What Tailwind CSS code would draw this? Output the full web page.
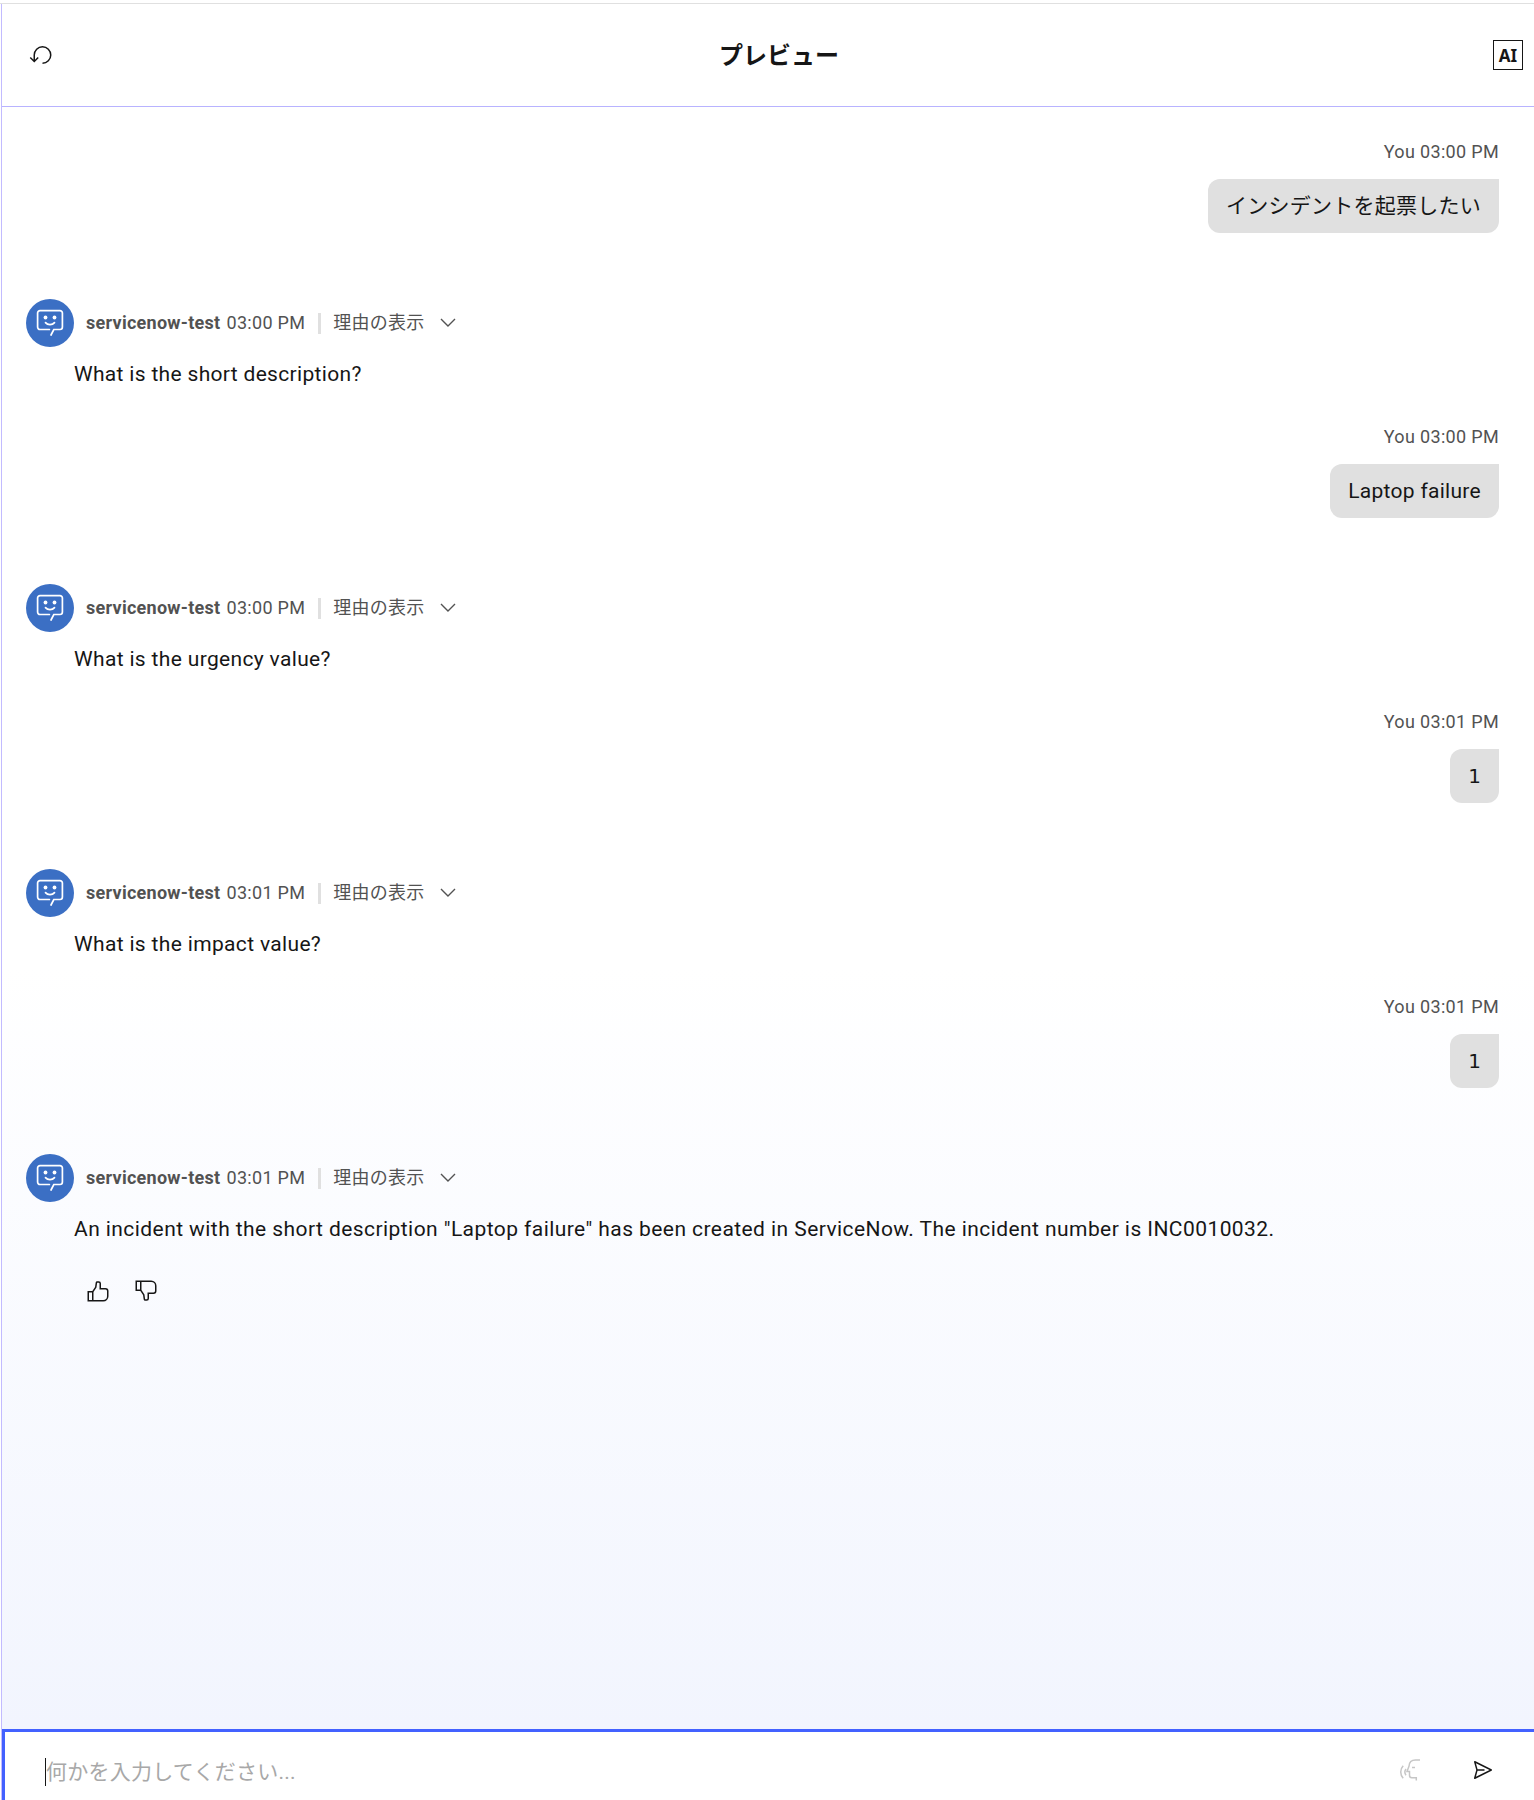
<!DOCTYPE html>
<html lang="ja">
<head>
<meta charset="utf-8">
<title>プレビュー</title>
<script src="https://cdn.jsdelivr.net/npm/@tailwindcss/browser@4"></script>
</head>
<body class="bg-white">
<svg class="hidden">
  <symbol id="bot" viewBox="0 0 48 48">
    <circle cx="24" cy="24" r="24" fill="#3b6fc4"/>
    <path d="M25 36 27.800 30.500H34a2.400 2.400 0 0 0 2.400-2.400V14a2.400 2.400 0 0 0-2.400-2.400H14a2.400 2.400 0 0 0-2.400 2.400v14.100a2.400 2.400 0 0 0 2.400 2.400h9.400M19.500 23.600c2.200 2.600 6.800 2.600 9 0" fill="none" stroke="#fff" stroke-width="1.700" stroke-linecap="round"/>
    <circle cx="19.500" cy="18.500" r="1.900" fill="#fff"/><circle cx="28.500" cy="18.500" r="1.900" fill="#fff"/>
  </symbol>
  <symbol id="chevron" viewBox="0 0 16 10"><path d="M1 1l7 7 7-7" fill="none" stroke="#525252" stroke-width="1.400"/></symbol>
  <symbol id="thumb" viewBox="0 0 32 32"><path d="M26,12H20V6a3.0033,3.0033,0,0,0-3-3H14.8672a2.0094,2.0094,0,0,0-1.98,1.7173l-.8453,5.9165L8.4648,16H2V30H23a7.0078,7.0078,0,0,0,7-7V16A4.0045,4.0045,0,0,0,26,12ZM8,28H4V18H8Zm20-5a5.0057,5.0057,0,0,1-5,5H10V17.3027l3.9578-5.9365L14.8672,5H17a1.0008,1.0008,0,0,1,1,1v8h8a2.0025,2.0025,0,0,1,2,2Z" fill="#161616"/></symbol>
</svg>
<div class="h-[1800px] w-[1534px] overflow-hidden pt-[3px] font-['Roboto','Noto_Sans_CJK_JP',sans-serif] text-[#161616]">
<div class="h-full border-t border-[#e0e0e0]">
  <div class="ml-px flex h-[1796px] flex-col border-l border-[#c2bbff]">
    <header class="flex h-[103px] shrink-0 items-center justify-between border-b border-[#b8b3ff] pr-[11px] pl-[27px]">
      <svg class="size-6" viewBox="0 0 32 32" fill="#161616"><path d="M18,28A12,12,0,1,0,6,16v6.2L2.4,18.6,1,20l6,6,6-6-1.4-1.4L8,22.2V16H8A10,10,0,1,1,18,26Z"/></svg>
      <h1 class="mt-0.5 ml-3 text-2xl font-bold">プレビュー</h1>
      <div class="flex size-[30px] items-center justify-center border border-[#161616] font-['Noto_Sans'] text-[17px] leading-none font-bold">AI</div>
    </header>

    <main class="flex min-h-0 flex-1 flex-col bg-linear-to-b from-white from-53% to-[#f2f5fe] pt-[33px] pr-[35px] pl-6">
      <section class="flex h-[285px] shrink-0 flex-col">
        <div class="flex flex-col items-end gap-[15px]">
          <p class="text-lg leading-6 tracking-[0.33px] text-[#525252]">You 03:00 PM</p>
          <p class="flex h-[54px] items-center rounded-xl rounded-tr-none bg-[#e0e0e0] px-[18px] pt-px text-[21px] tracking-[0.24px]">インシデントを起票したい</p>
        </div>
        <div class="mt-[66px] flex h-12 items-center text-lg text-[#525252]">
          <svg class="size-12"><use href="#bot"/></svg>
          <span class="ml-3 font-bold tracking-[0.27px]">servicenow-test</span><span class="ml-1.5 tracking-[0.3px]">03:00 PM</span>
          <span class="ml-[13px] h-[21px] w-[3px] bg-[#e0e0e0]"></span><span class="ml-3 tracking-[0.24px]">理由の表示</span>
          <svg class="ml-4 h-2.5 w-4"><use href="#chevron"/></svg>
        </div>
        <p class="mt-[13px] ml-12 text-[21px] leading-7 tracking-[0.32px]">What is the short description?</p>
      </section>

      <section class="flex h-[285px] shrink-0 flex-col">
        <div class="flex flex-col items-end gap-[15px]">
          <p class="text-lg leading-6 tracking-[0.33px] text-[#525252]">You 03:00 PM</p>
          <p class="flex h-[54px] items-center rounded-xl rounded-tr-none bg-[#e0e0e0] px-[18px] pt-0.5 text-[21px] tracking-[0.29px]">Laptop failure</p>
        </div>
        <div class="mt-[66px] flex h-12 items-center text-lg text-[#525252]">
          <svg class="size-12"><use href="#bot"/></svg>
          <span class="ml-3 font-bold tracking-[0.27px]">servicenow-test</span><span class="ml-1.5 tracking-[0.3px]">03:00 PM</span>
          <span class="ml-[13px] h-[21px] w-[3px] bg-[#e0e0e0]"></span><span class="ml-3 tracking-[0.24px]">理由の表示</span>
          <svg class="ml-4 h-2.5 w-4"><use href="#chevron"/></svg>
        </div>
        <p class="mt-[13px] ml-12 text-[21px] leading-7 tracking-[0.34px]">What is the urgency value?</p>
      </section>

      <section class="flex h-[285px] shrink-0 flex-col">
        <div class="flex flex-col items-end gap-[15px]">
          <p class="text-lg leading-6 tracking-[0.33px] text-[#525252]">You 03:01 PM</p>
          <p class="flex h-[54px] w-[49px] items-center justify-center rounded-xl rounded-tr-none bg-[#e0e0e0] font-['DejaVu_Sans'] text-xl">1</p>
        </div>
        <div class="mt-[66px] flex h-12 items-center text-lg text-[#525252]">
          <svg class="size-12"><use href="#bot"/></svg>
          <span class="ml-3 font-bold tracking-[0.27px]">servicenow-test</span><span class="ml-1.5 tracking-[0.3px]">03:01 PM</span>
          <span class="ml-[13px] h-[21px] w-[3px] bg-[#e0e0e0]"></span><span class="ml-3 tracking-[0.24px]">理由の表示</span>
          <svg class="ml-4 h-2.5 w-4"><use href="#chevron"/></svg>
        </div>
        <p class="mt-[13px] ml-12 text-[21px] leading-7 tracking-[0.34px]">What is the impact value?</p>
      </section>

      <section class="flex shrink-0 flex-col">
        <div class="flex flex-col items-end gap-[15px]">
          <p class="text-lg leading-6 tracking-[0.33px] text-[#525252]">You 03:01 PM</p>
          <p class="flex h-[54px] w-[49px] items-center justify-center rounded-xl rounded-tr-none bg-[#e0e0e0] font-['DejaVu_Sans'] text-xl">1</p>
        </div>
        <div class="mt-[66px] flex h-12 items-center text-lg text-[#525252]">
          <svg class="size-12"><use href="#bot"/></svg>
          <span class="ml-3 font-bold tracking-[0.27px]">servicenow-test</span><span class="ml-1.5 tracking-[0.3px]">03:01 PM</span>
          <span class="ml-[13px] h-[21px] w-[3px] bg-[#e0e0e0]"></span><span class="ml-3 tracking-[0.24px]">理由の表示</span>
          <svg class="ml-4 h-2.5 w-4"><use href="#chevron"/></svg>
        </div>
        <p class="mt-[13px] ml-12 text-[21px] leading-7 tracking-[0.43px]">An incident with the short description "Laptop failure" has been created in ServiceNow. The incident number is INC0010032.</p>
        <div class="mt-9 ml-[60px] flex gap-6">
          <svg class="size-6"><use href="#thumb"/></svg>
          <svg class="size-6 -scale-y-100"><use href="#thumb"/></svg>
        </div>
      </section>
    </main>

    <footer class="flex h-[71px] shrink-0 border-t-[3px] border-l-[3px] border-[#4361ff] bg-white pt-[26px] pr-[39px] pl-10">
      <span class="h-7 w-px bg-[#161616]"></span>
      <span class="flex-1 text-[21px] leading-7 tracking-[0.24px] text-[#a8a8a8]">何かを入力してください...</span>
      <svg class="mr-[49px] size-6" viewBox="0 0 24 24" fill="none" stroke="#c6c6c6" stroke-width="1.500"><path d="M22 2h-4.500C13.300 2 11.200 4.600 11 8.200L9 13.400h2.500v3.800c0 1.700.8 2.500 2.300 2.500h4.500V22.500M14 9.600h3M5.200 7.800c-3.300 3.500-3.300 9 0 12.500M8 11c-1.400 1.800-1.400 4.300 0 6.200"/></svg>
      <svg class="size-6" viewBox="0 0 32 32" fill="#161616"><path d="M27.45,15.11l-22-11a1,1,0,0,0-1.08.12,1,1,0,0,0-.33,1L7,16,4,26.74A1,1,0,0,0,5,28a1,1,0,0,0,.45-.11l22-11a1,1,0,0,0,0-1.78Zm-20.9,10L8.76,17H18V15H8.76L6.55,6.89,24.76,16Z"/></svg>
    </footer>
  </div>
</div>
</div>
</body>
</html>
